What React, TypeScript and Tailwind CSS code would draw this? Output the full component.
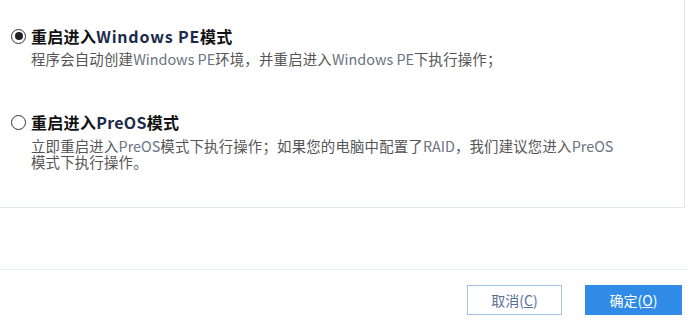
import { useState } from "react";

const font = {
  fontFamily: '"Noto Sans CJK SC", "Noto Sans", "Liberation Sans", sans-serif',
};

type Mode = "pe" | "preos";

const Radio = ({ checked }: { checked: boolean }) => (
  <span className="flex h-[15px] w-[15px] shrink-0 items-center justify-center rounded-full border-[1.5px] border-[#333]">
    {checked && <span className="h-[8px] w-[8px] rounded-full bg-[#222]" />}
  </span>
);

export default function App() {
  const [mode, setMode] = useState<Mode>("pe");

  return (
    <div
      className="relative flex h-[327px] w-[689px] flex-col overflow-hidden bg-white"
      style={font}
    >
      {/* Options panel */}
      <div className="h-[208px] w-[685px] border-b border-r border-[#dfe6ef] pt-[26px]">
        {/* Windows PE */}
        <div className="cursor-pointer" onClick={() => setMode("pe")}>
          <div className="flex items-center gap-[5px] pl-[11px]">
            <Radio checked={mode === "pe"} />
            <span className="text-[16px] font-bold leading-[20px] tracking-[0.3px] text-[#111]">
              重启进入<span className="tracking-[0.8px] text-[#1c2b4a]">Windows PE</span>模式
            </span>
          </div>
          <p className="mt-[5px] pl-[31px] text-[14.4px] leading-[16px] tracking-[0.2px] text-[#555]">
            程序会自动创建<span className="tracking-normal text-[#6b7280]">Windows PE</span>
            环境，并重启进入<span className="tracking-normal text-[#6b7280]">Windows PE</span>
            下执行操作；
          </p>
        </div>

        {/* PreOS */}
        <div className="mt-[45px] cursor-pointer" onClick={() => setMode("preos")}>
          <div className="flex items-center gap-[5px] pl-[11px]">
            <Radio checked={mode === "preos"} />
            <span className="text-[16px] font-bold leading-[20px] tracking-[0.3px] text-[#111]">
              重启进入<span className="text-[#1c2b4a]">PreOS</span>模式
            </span>
          </div>
          <p className="mt-[6px] w-[626px] pl-[31px] text-[14.4px] leading-[16px] tracking-[0.2px] text-[#555]">
            立即重启进入<span className="tracking-normal text-[#6b7280]">PreOS</span>
            模式下执行操作；如果您的电脑中配置了
            <span className="tracking-normal text-[#6b7280]">RAID</span>，我们建议您进入
            <span className="tracking-normal text-[#6b7280]">PreOS</span>模式下执行操作。
          </p>
        </div>
      </div>

      {/* Footer */}
      <div className="mt-[61px] flex justify-end gap-[23px] border-t border-[#e8edf3] pr-[7px] pt-[15px]">
        <button className="h-[30px] w-[95px] border border-[#a9c3e6] bg-white text-[14px] text-[#5a7099]">
          取消(<span className="underline">C</span>)
        </button>
        <button className="h-[30px] w-[97px] bg-[#2f8be6] text-[14px] text-white">
          确定(<span className="underline">O</span>)
        </button>
      </div>
    </div>
  );
}
